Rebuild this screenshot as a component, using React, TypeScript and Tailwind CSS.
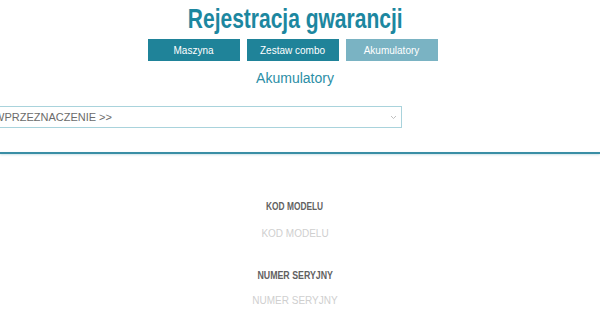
const tabs = [
  { label: "Maszyna", active: false },
  { label: "Zestaw combo", active: false },
  { label: "Akumulatory", active: true },
];

export default function App() {
  return (
    <div className="w-[600px] h-[330px] overflow-hidden bg-white font-['Liberation_Sans',Arial,sans-serif]">
      <div className="w-[590px] flex flex-col items-center">
        <h1 className="mt-[1px] inline-block scale-x-[0.75] text-[28px] leading-[36px] font-bold text-[#1c87a0] whitespace-nowrap">
          Rejestracja gwarancji
        </h1>
        <div className="mt-[2px] mr-[5px] flex gap-[7px]">
          {tabs.map((t) => (
            <button
              key={t.label}
              className={
                "w-[92px] h-[22px] text-[10px] text-white font-['Liberation_Sans',Arial,sans-serif] " +
                (t.active ? "bg-[#7ab3c3]" : "bg-[#1f8399]")
              }
            >
              {t.label}
            </button>
          ))}
        </div>
        <p className="mt-[7px] text-[14px] leading-[20px] text-[#2b8ea6]">Akumulatory</p>
      </div>

      <div className="mt-[18px] ml-[-17px] w-[419px] h-[22px] border border-[#a9d3dc] flex items-center justify-between pl-[10px] pr-[4px]">
        <span className="text-[11px] text-[#6b6b6b] whitespace-nowrap">WPRZEZNACZENIE &gt;&gt;</span>
        <svg width="7" height="5" viewBox="0 0 7 5" className="text-[#b0b0b0]">
          <path d="M1 1l2.5 2.5L6 1" stroke="currentColor" strokeWidth="0.8" fill="none" />
        </svg>
      </div>

      <div className="mt-[24px] h-[2px] bg-[#3a8ea5] shadow-[0_1px_2px_rgba(58,142,165,0.25)]" />

      <div className="w-[590px] flex flex-col items-center pt-[45px]">
        <p className="inline-block scale-x-[0.76] text-[11px] leading-[14px] font-bold text-[#616161] whitespace-nowrap">
          KOD MODELU
        </p>
        <p className="mt-[14px] text-[10px] leading-[14px] text-[#cfcfcf]">KOD MODELU</p>
        <p className="mt-[27px] inline-block scale-x-[0.8] text-[11px] leading-[14px] font-bold text-[#616161] whitespace-nowrap">
          NUMER SERYJNY
        </p>
        <p className="mt-[12px] text-[10px] leading-[14px] text-[#cfcfcf]">NUMER SERYJNY</p>
      </div>
    </div>
  );
}
